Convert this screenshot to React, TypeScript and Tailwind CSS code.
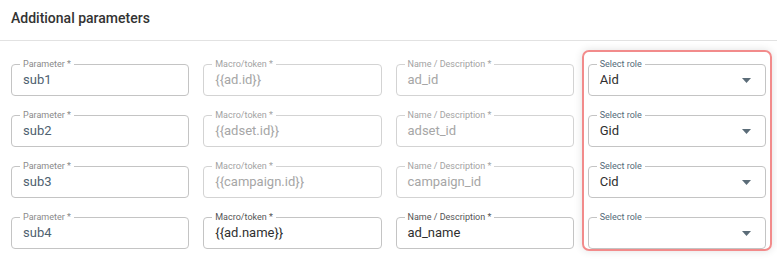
type Cell = {
  label: string;
  value: string;
  tone: "slate" | "muted" | "dark";
};

const rows: { cells: Cell[]; role: string }[] = [
  {
    cells: [
      { label: "Parameter *", value: "sub1", tone: "slate" },
      { label: "Macro/token *", value: "{{ad.id}}", tone: "muted" },
      { label: "Name / Description *", value: "ad_id", tone: "muted" },
    ],
    role: "Aid",
  },
  {
    cells: [
      { label: "Parameter *", value: "sub2", tone: "slate" },
      { label: "Macro/token *", value: "{{adset.id}}", tone: "muted" },
      { label: "Name / Description *", value: "adset_id", tone: "muted" },
    ],
    role: "Gid",
  },
  {
    cells: [
      { label: "Parameter *", value: "sub3", tone: "slate" },
      { label: "Macro/token *", value: "{{campaign.id}}", tone: "muted" },
      { label: "Name / Description *", value: "campaign_id", tone: "muted" },
    ],
    role: "Cid",
  },
  {
    cells: [
      { label: "Parameter *", value: "sub4", tone: "slate" },
      { label: "Macro/token *", value: "{{ad.name}}", tone: "dark" },
      { label: "Name / Description *", value: "ad_name", tone: "dark" },
    ],
    role: "",
  },
];

function Field({ label, value, tone }: Cell) {
  const box =
    tone === "muted" ? "border-[#d3d3d3]" : "border-[#c4c4c4]";
  const labelColor =
    tone === "muted"
      ? "text-[#a3a3a3]"
      : tone === "dark"
        ? "text-[#555]"
        : "text-[#8a8a8a]";
  const valueColor =
    tone === "muted"
      ? "text-[#a6a6a6]"
      : tone === "dark"
        ? "text-[#2f2f2f]"
        : "text-[#4e6170]";

  return (
    <div className={`relative flex h-[32px] items-center rounded border ${box} pl-[11px]`}>
      <span className={`absolute -top-[7px] left-[8px] bg-white px-[3px] text-[9px] leading-[12px] ${labelColor}`}>
        {label}
      </span>
      <span className={`text-[13px] ${valueColor}`}>{value}</span>
    </div>
  );
}

function RoleSelect({ value }: { value: string }) {
  return (
    <div className="relative flex h-[32px] items-center justify-between rounded border border-[#c4c4c4] pl-[11px] pr-[14px]">
      <span className="absolute -top-[7px] left-[8px] bg-white px-[3px] text-[9px] leading-[12px] text-[#546a78]">
        Select role
      </span>
      <span className="text-[13px] text-[#2f2f2f]">{value}</span>
      <svg width="9" height="5" viewBox="0 0 9 5" className="fill-[#5b6c78]">
        <path d="M0 0h9L4.5 5z" />
      </svg>
    </div>
  );
}

export default function App() {
  return (
    <div
      className="h-[260px] w-[777px] bg-white"
      style={{ fontFamily: "Roboto, 'Liberation Sans', sans-serif" }}
    >
      <div className="flex h-[41px] items-center border-b border-[#e2e2e2] px-[11px] pb-[3px]">
        <h2 className="text-[14px] font-medium text-[#333]">Additional parameters</h2>
      </div>

      <div className="relative mt-[23px] px-[11px]">
        <div className="grid grid-cols-4 gap-x-[14px] gap-y-[19px]">
          {rows.map((row, i) => (
            <div key={i} className="contents">
              {row.cells.map((cell) => (
                <Field key={cell.label} {...cell} />
              ))}
              <RoleSelect value={row.role} />
            </div>
          ))}
        </div>

        {/* highlight around role column */}
        <div className="pointer-events-none absolute -top-[14px] -bottom-[2px] right-[5px] w-[190px] rounded-[7px] border-2 border-[#f28b8b] shadow-[0_0_8px_rgba(0,0,0,0.12)]" />
      </div>
    </div>
  );
}
